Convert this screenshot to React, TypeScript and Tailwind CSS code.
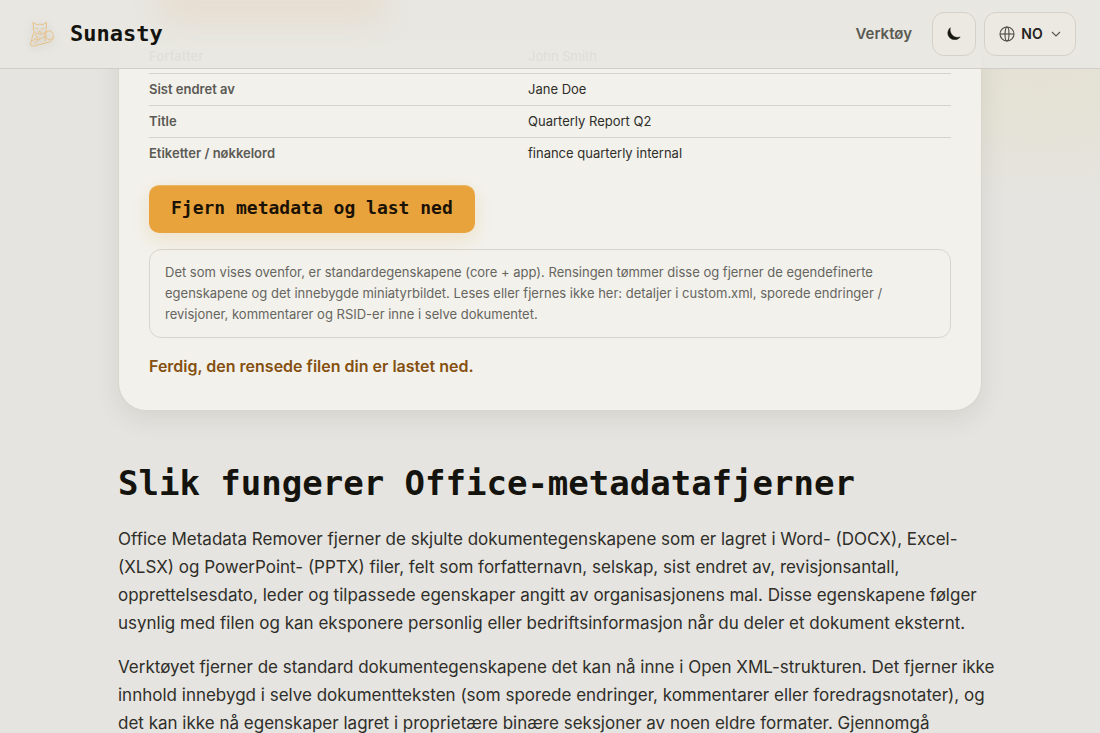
import { useState } from 'react';

type Property = { label: string; value: string };

const PROPERTIES: Property[] = [
    { label: 'Forfatter', value: 'John Smith' },
    { label: 'Sist endret av', value: 'Jane Doe' },
    { label: 'Title', value: 'Quarterly Report Q2' },
    { label: 'Etiketter / nøkkelord', value: 'finance quarterly internal' },
];

function CatLogo() {
    return (
        <svg
            viewBox="0 0 28 30"
            className="h-[30px] w-7 drop-shadow-[0_2px_4px_rgba(120,110,80,0.3)]"
            fill="none"
            stroke="#e8c08a"
            strokeWidth="1"
            strokeLinecap="round"
            strokeLinejoin="round"
            aria-hidden="true"
        >
            {/* head */}
            <path d="M5.5 9.5 L5 3.2 L8.5 5.6 Q11.7 4.8 15 5.6 L18.5 3.2 L18.2 9.5 Q18.6 14.6 11.8 15.4 Q5 14.6 5.5 9.5 Z" />
            <path d="M8 9.3 l1.8 .7 M15.6 9.3 l-1.8 .7 M11.8 11.8 v1 M10.2 13.2 q.9 .6 1.6 -.4 q.7 1 1.6 .4" />
            {/* body and paws */}
            <path d="M5.8 13.5 Q4 17 3.8 21 Q1.6 24.5 3 26.6 Q5 28 8 26.4 L17.5 24 Q25 23 25.4 18.5" />
            <path d="M3.8 22.5 L7.5 19.8 L10.5 21 L16.5 17.5 M6.5 24.2 L10.5 21 M7.2 16 Q8 19 11 19" />
            {/* tail */}
            <path d="M18 13.2 Q20 11 23 12.2 Q25.6 14 25.4 18.5 Q21 22.5 18.5 19.5 Q16.8 16 18 13.2 M17 14.5 V22" />
        </svg>
    );
}

function MoonIcon() {
    return (
        <svg viewBox="0 0 16 16" className="size-4" fill="#171711" stroke="#171711" strokeWidth="0.6" strokeLinejoin="round" aria-hidden="true">
            <path d="M4.2 1.8 C0.6 5.4 1.4 10.6 5.2 12.7 C8.4 14.4 12.2 13.6 14.2 11 C11.6 12 8.6 11.5 6.4 9.3 C4.3 7.2 3.7 4.4 4.2 1.8 Z" />
        </svg>
    );
}

function GlobeIcon() {
    return (
        <svg viewBox="0 0 16 16" className="size-4" fill="none" stroke="#4b4a43" strokeWidth="1.1" aria-hidden="true">
            <circle cx="8" cy="8" r="7" />
            <ellipse cx="8" cy="8" rx="2" ry="7" />
            <path d="M1 8h14" />
        </svg>
    );
}

function Header({ onToggle }: { onToggle: () => void }) {
    return (
        <header className="sticky top-0 z-10 flex h-[69px] items-center justify-between overflow-hidden border-b border-[#cfcec8] bg-[#e8e7e1]/95 pr-6 pl-7">
            {/* soft glow behind the bar */}
            <div className="pointer-events-none absolute -top-4 left-40 h-9 w-56 bg-[#e6d5c0]/60 blur-lg" />
            <a href="#top" className="relative flex items-center gap-3.5 text-[22px] font-bold text-[#14130d]">
                <CatLogo />
                <span className="pb-0.5 font-['DejaVu_Sans_Mono',monospace]">Sunasty</span>
            </a>
            <nav className="flex items-center gap-2">
                <a href="#tools" className="mr-3 text-[15px] font-semibold text-[#5b5a53]">
                    Verktøy
                </a>
                <button
                    type="button"
                    aria-label="Bytt tema"
                    onClick={onToggle}
                    className="flex size-11 items-center justify-center rounded-xl border border-[#d3d1c9] bg-[#ece9e2]"
                >
                    <MoonIcon />
                </button>
                <button
                    type="button"
                    aria-haspopup="listbox"
                    className="flex h-11 w-[92px] items-center justify-center rounded-xl border border-[#d3d1c9] bg-[#ece9e2] text-sm font-semibold text-[#24231d]"
                >
                    <GlobeIcon />
                    <span className="mr-2 ml-1.5">NO</span>
                    <svg viewBox="0 0 10 10" className="size-2.5" fill="none" stroke="#5b5a53" strokeWidth="1.2" aria-hidden="true">
                        <path d="M1 3 L5 7 L9 3" />
                    </svg>
                </button>
            </nav>
        </header>
    );
}

function App() {
    const [dark, setDark] = useState(false);

    return (
        <div
            id="top"
            data-theme={dark ? 'dark' : 'light'}
            className="min-h-screen overflow-x-clip bg-[#e5e4e0] bg-[radial-gradient(ellipse_240px_140px_at_1040px_60px,#e5e1d4_0%,#e5e2d7_50%,#e5e4e0_100%)] font-[Inter,sans-serif] text-[#2f2e29]"
        >
            <Header onToggle={() => setDark(!dark)} />

            <main className="mx-auto -mt-7 max-w-[864px]">
                {/* Verktøykort */}
                <section className="rounded-b-[28px] border border-t-0 border-[#d6d5ce] bg-[#f2f1ec] px-[30px] pb-8 shadow-[0_8px_24px_rgba(70,65,45,0.1)]">
                    <table className="w-full table-fixed text-left text-[13px] leading-[19px]">
                        <tbody>
                            {PROPERTIES.map((p) => (
                                <tr key={p.label} className="h-8 border-b border-[#d3d2cb] last:border-b-0">
                                    <th scope="row" className="w-[379px] font-semibold text-[#5b5a53]">
                                        {p.label}
                                    </th>
                                    <td>{p.value}</td>
                                </tr>
                            ))}
                        </tbody>
                    </table>

                    <button
                        type="button"
                        className="mt-4 h-12 rounded-[10px] border-t border-[#eab765] bg-[#e8a33d] px-[22px] pb-1 font-['DejaVu_Sans_Mono',monospace] text-lg font-bold text-[#1a1205] shadow-[0_6px_18px_rgba(232,163,61,0.2)]"
                    >
                        Fjern metadata og last ned
                    </button>

                    <p className="mt-4 rounded-xl border border-[#d6d5ce] px-[15px] py-3 text-[13px] leading-[21px] text-[#66655e]">
                        Det som vises ovenfor, er standardegenskapene (core + app). Rensingen tømmer disse og fjerner de
                        egendefinerte egenskapene og det innebygde miniatyrbildet. Leses eller fjernes ikke her: detaljer
                        i custom.xml, sporede endringer / revisjoner, kommentarer og RSID-er inne i selve dokumentet.
                    </p>

                    <p role="status" className="mt-4 text-base leading-6 font-semibold text-[#85500f]">
                        Ferdig, den rensede filen din er lastet ned.
                    </p>
                </section>

                <article className="-mr-5 pt-[50px] text-[17px] leading-7">
                    <h2 className="font-['DejaVu_Sans_Mono',monospace] text-[34px] leading-[44px] font-bold whitespace-nowrap text-[#14130d]">
                        Slik fungerer Office-metadatafjerner
                    </h2>
                    <p className="mt-5">
                        Office Metadata Remover fjerner de skjulte dokumentegenskapene som er lagret i Word- (DOCX), Excel-
                        (XLSX) og PowerPoint- (PPTX) filer, felt som forfatternavn, selskap, sist endret av, revisjonsantall,
                        opprettelsesdato, leder og tilpassede egenskaper angitt av organisasjonens mal. Disse egenskapene
                        følger usynlig med filen og kan eksponere personlig eller bedriftsinformasjon når du deler et
                        dokument eksternt.
                    </p>
                    <p className="mt-4">
                        Verktøyet fjerner de standard dokumentegenskapene det kan nå inne i Open XML-strukturen. Det fjerner
                        ikke innhold innebygd i selve dokumentteksten (som sporede endringer, kommentarer eller
                        foredragsnotater), og det kan ikke nå egenskaper lagret i proprietære binære seksjoner av noen eldre
                        formater. Gjennomgå
                    </p>
                </article>
            </main>
        </div>
    );
}

export default App;
